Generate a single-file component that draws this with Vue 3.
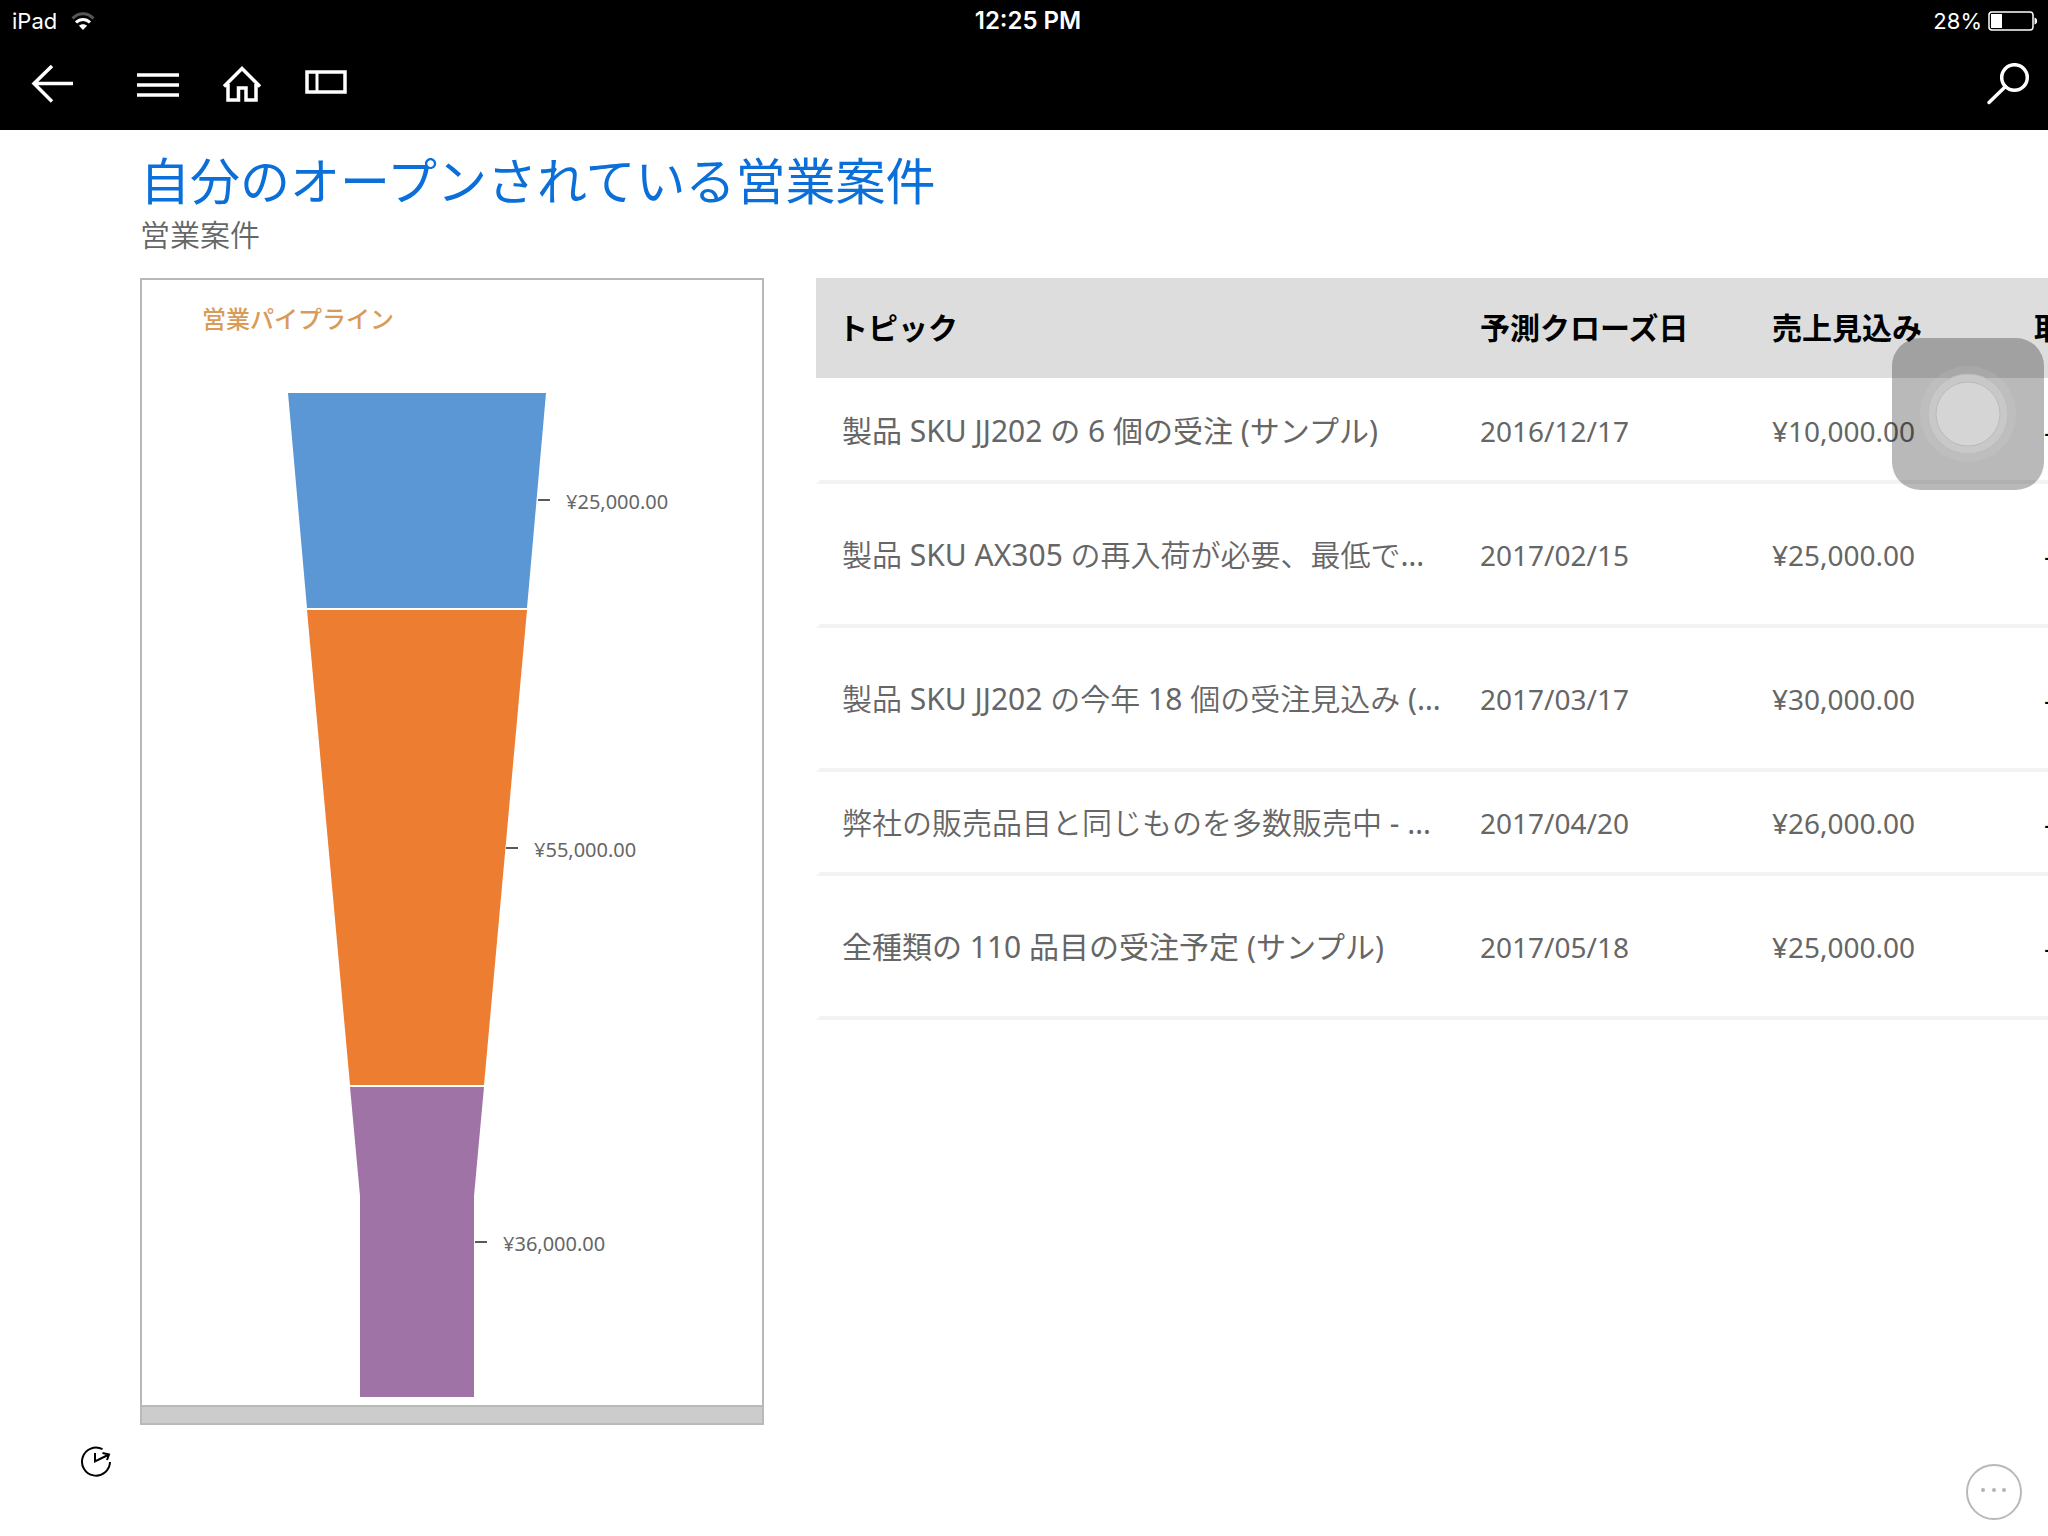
<script setup>
const rows = [
  { topic: '製品 SKU JJ202 の 6 個の受注 (サンプル)', date: '2016/12/17', amount: '¥10,000.00', strong: true },
  { topic: '製品 SKU AX305 の再入荷が必要、最低で…', date: '2017/02/15', amount: '¥25,000.00', tall: true },
  { topic: '製品 SKU JJ202 の今年 18 個の受注見込み (…', date: '2017/03/17', amount: '¥30,000.00', tall: true },
  { topic: '弊社の販売品目と同じものを多数販売中 - …', date: '2017/04/20', amount: '¥26,000.00' },
  { topic: '全種類の 110 品目の受注予定 (サンプル)', date: '2017/05/18', amount: '¥25,000.00', strong: true, tall: true },
]

const stages = [
  { color: '#5b96d5', points: '146,40 404,40 385,255 165,255', label: '¥25,000.00', tick: 396, y: 147 },
  { color: '#ed7d31', points: '165,257 385,257 342,732 208,732', label: '¥55,000.00', tick: 364, y: 495 },
  { color: '#a073a6', points: '208,734 342,734 332,843 332,1044 218,1044 218,843', label: '¥36,000.00', tick: 333, y: 889 },
]
</script>

<template>
  <div class="app">
    <header class="top">
      <div class="status">
        <div class="status-left">
          <span>iPad</span>
          <svg width="24" height="18" viewBox="0 0 24 18" aria-hidden="true">
            <path d="M1.5 6.5C7.5 0.2 16.5 0.2 22.5 6.5" fill="none" stroke="#555" stroke-width="3" />
            <path d="M5 10.5C9 6.5 15 6.5 19 10.5" fill="none" stroke="#fff" stroke-width="3" />
            <path d="M12 18L8 13.7C10 11.7 14 11.7 16 13.7Z" fill="#fff" />
          </svg>
        </div>
        <span class="clock">12:25 PM</span>
        <div class="status-right">
          <span>28%</span>
          <svg width="50" height="20" viewBox="0 0 50 20" aria-hidden="true">
            <rect x="1" y="1" width="44" height="18" rx="3" fill="none" stroke="#fff" stroke-width="1.5" />
            <rect x="3" y="3" width="11" height="14" fill="#fff" />
            <path d="M46.5 6.5C50 7 50 13 46.5 13.5Z" fill="#fff" />
          </svg>
        </div>
      </div>
      <nav class="bar">
        <button class="icon back" type="button" aria-label="戻る">
          <svg viewBox="0 0 44 44"><path d="M43 20.5H4M22 3L4 20.5L22 38.5" stroke-width="3.5" /></svg>
        </button>
        <button class="icon" type="button" aria-label="メニュー">
          <svg viewBox="0 0 44 44"><path d="M1 12H43M1 22H43M1 32H43" stroke-width="3.5" /></svg>
        </button>
        <button class="icon" type="button" aria-label="ホーム">
          <svg viewBox="0 0 44 44">
            <path d="M4 23.5L22 5.5L40 23.5M8 21V37H18.5V25H26V37H36V21" stroke-width="3.5" />
          </svg>
        </button>
        <button class="icon" type="button" aria-label="パネル">
          <svg viewBox="0 0 44 44">
            <path d="M3 9H41V29H3Z" stroke-width="3.5" />
            <path d="M13 9V29" />
          </svg>
        </button>
        <button class="icon search" type="button" aria-label="検索">
          <svg viewBox="0 0 44 44">
            <circle cx="28.5" cy="14.5" r="12.8" stroke-width="3.5" />
            <path d="M19.5 23.5L3 39.5" stroke-width="3.5" stroke-linecap="round" />
          </svg>
        </button>
      </nav>
    </header>

    <main class="main">
      <h1>自分のオープンされている営業案件</h1>
      <p class="entity">営業案件</p>
      <div class="columns">
        <section class="card">
          <h2>営業パイプライン</h2>
          <svg class="funnel" viewBox="0 0 620 1052" role="img" aria-label="営業パイプライン">
            <g v-for="s in stages" :key="s.label">
              <polygon :points="s.points" :fill="s.color" />
              <line :x1="s.tick" :x2="s.tick + 12" :y1="s.y" :y2="s.y" stroke="#595959" stroke-width="2" />
              <text :x="s.tick + 28" :y="s.y + 9">{{ s.label }}</text>
            </g>
          </svg>
          <div class="card-foot"></div>
        </section>

        <div class="grid">
          <table>
            <colgroup>
              <col class="c-topic" /><col class="c-date" /><col class="c-amount" /><col class="c-account" />
            </colgroup>
            <thead>
              <tr><th>トピック</th><th>予測クローズ日</th><th>売上見込み</th><th>取</th></tr>
            </thead>
            <tbody>
              <tr v-for="r in rows" :key="r.topic" :class="{ tall: r.tall }">
                <td class="topic" :class="{ strong: r.strong }">{{ r.topic }}</td>
                <td>{{ r.date }}</td>
                <td>{{ r.amount }}</td>
                <td class="account">--</td>
              </tr>
            </tbody>
          </table>
        </div>
      </div>
    </main>

    <footer class="foot">
      <button class="refresh" type="button" aria-label="更新">
        <svg viewBox="0 0 32 32">
          <path d="M22.5 3.2A14 14 0 1 0 30 16M15 7V15.5L28 9M22.5 7L29 8.5L27 14" />
        </svg>
      </button>
      <button class="more" type="button" aria-label="その他">
        <svg viewBox="0 0 56 56">
          <circle cx="28" cy="28" r="27" fill="none" stroke="#b9b9b9" stroke-width="2" />
          <g fill="#b3b3b3"><circle cx="17" cy="26" r="2" /><circle cx="28" cy="26" r="2" /><circle cx="38" cy="26" r="2" /></g>
        </svg>
      </button>
    </footer>

    <button class="touch" type="button" aria-label="AssistiveTouch">
      <svg viewBox="0 0 152 152">
        <circle cx="76" cy="76" r="48" fill="#fff" fill-opacity="0.08" />
        <circle cx="76" cy="76" r="40" fill="#c8c8c8" stroke="#bcbcbc" />
        <circle cx="76" cy="76" r="32" fill="#d5d5d5" stroke="#bababa" />
      </svg>
    </button>
  </div>
</template>

<style>
body {
  margin: 0;
  background: #fff;
}
</style>

<style scoped>
.app {
  position: relative;
  min-height: 100vh;
  overflow: hidden;
  font-family: "Noto Sans", "Noto Sans CJK JP", sans-serif;
  color: #666;
}
button {
  padding: 0;
  border: 0;
  background: none;
}
svg {
  display: block;
}
.top {
  background: #000;
  color: #fff;
}
.status {
  display: grid;
  grid-template-columns: 1fr auto 1fr;
  align-items: center;
  height: 42px;
  padding: 0 10px 0 12px;
  font: 22px/42px Inter, sans-serif;
}
.status-left,
.status-right {
  display: flex;
  align-items: center;
  gap: 14px;
}
.status-right {
  justify-content: flex-end;
  gap: 6px;
}
.clock {
  padding-left: 6px;
  font-size: 24px;
  font-weight: 600;
}
.bar {
  display: flex;
  align-items: center;
  gap: 40px;
  height: 86px;
  padding: 0 18px 2px 30px;
}
.icon {
  width: 44px;
  height: 44px;
}
.icon svg {
  width: 100%;
  fill: none;
  stroke: #fff;
  stroke-width: 3;
}
.back {
  margin-right: 22px;
}
.search {
  margin-left: auto;
}
.main {
  padding: 16px 0 0 140px;
}
h1 {
  margin: 0;
  font: 400 50px/64px "Noto Sans CJK JP", sans-serif;
  color: #0a6fd8;
}
.entity {
  margin: 0 0 22px;
  font: 350 30px/46px "Noto Sans CJK JP", sans-serif;
}
.columns {
  display: grid;
  grid-template-columns: 624px minmax(0, 1fr);
  align-items: start;
  gap: 52px;
}
.card {
  border: 2px solid #b9b9b9;
}
h2 {
  margin: 0;
  padding: 20px 60px 17px;
  font: 500 24px/36px "Noto Sans CJK JP", sans-serif;
  color: #d89b58;
}
.funnel {
  width: 100%;
}
.funnel text {
  font-size: 20px;
  fill: #666;
}
.card-foot {
  height: 16px;
  border-top: 2px solid #b9b9b9;
  background: #ccc;
}
.grid {
  overflow: hidden;
}
table {
  width: 1400px;
  table-layout: fixed;
  border-collapse: separate;
  border-spacing: 0;
  white-space: nowrap;
}
.c-topic { width: 640px; }
.c-date { width: 292px; }
.c-amount { width: 264px; }
th {
  height: 100px;
  padding: 0 0 0 24px;
  border-bottom: 2px solid #fff;
  background: #ddd;
  color: #000;
  font-size: 30px;
  font-weight: 700;
  line-height: 40px;
  text-align: left;
}
th:first-child,
th:last-child {
  padding-left: 22px;
}
td {
  box-sizing: border-box;
  height: 104px;
  padding: 2px 0 0 24px;
  border-bottom: 4px solid #f3f3f3;
  font-size: 28px;
  line-height: 40px;
}
.tall td {
  height: 144px;
}
.topic {
  border-left: 4px solid transparent;
  padding-left: 22px;
  font-family: "Noto Sans", "Noto Sans CJK JP DemiLight", "Noto Sans CJK JP", sans-serif;
  font-size: 30px;
}
.strong {
  font-family: "Noto Sans", "Noto Sans CJK JP", sans-serif;
}
.account {
  padding-left: 32px;
  color: #000;
}
.foot {
  display: flex;
  justify-content: space-between;
  height: 74px;
  padding: 21px 26px 0 80px;
}
.refresh {
  width: 32px;
  height: 32px;
}
.refresh svg {
  fill: none;
  stroke: #000;
  stroke-width: 2;
}
.more {
  align-self: flex-end;
  width: 56px;
  height: 56px;
}
.touch {
  position: absolute;
  top: 338px;
  right: 4px;
  width: 152px;
  height: 152px;
  border-radius: 28px;
  background: rgba(13, 13, 13, 0.29);
}
</style>
